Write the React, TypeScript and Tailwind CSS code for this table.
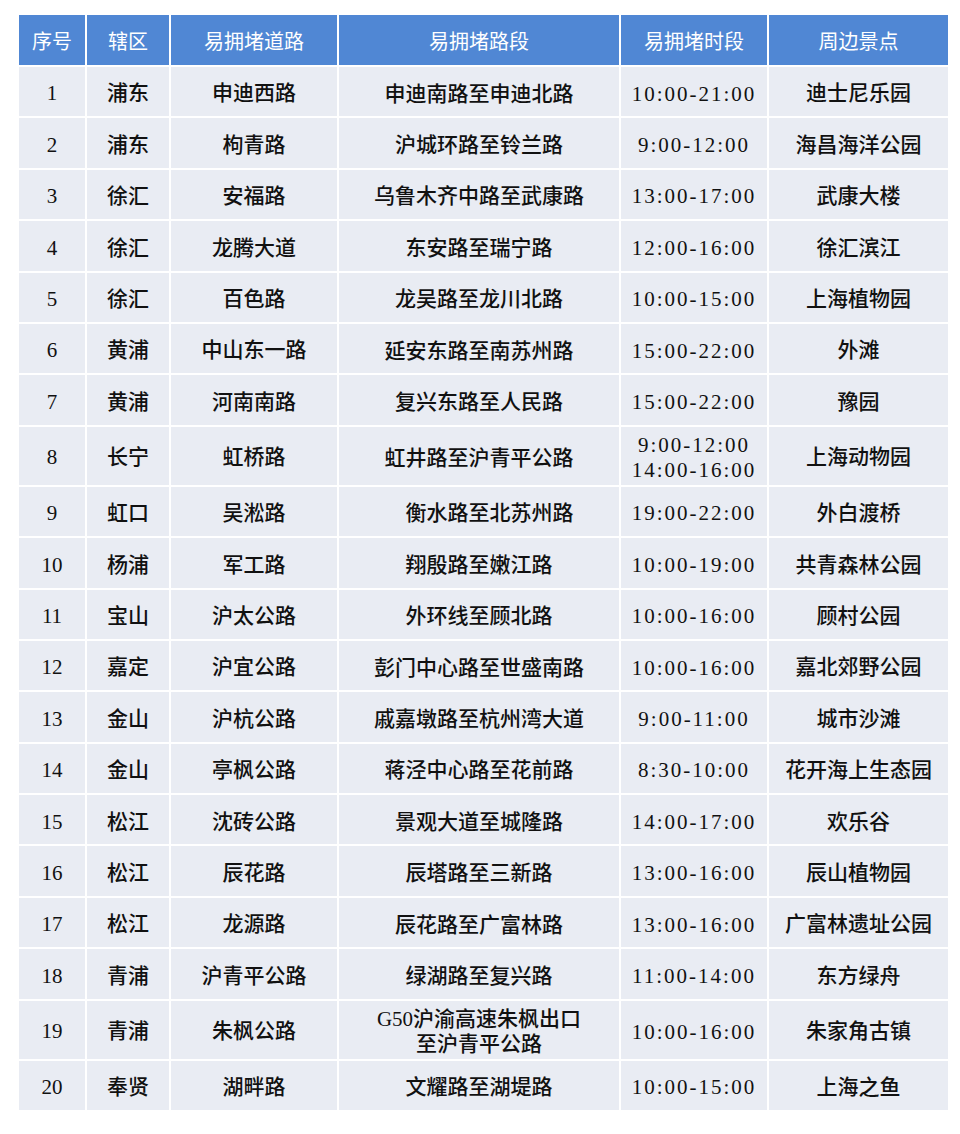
const rows: [string, string, string, string[], string[], string][] = [
  ["1", "浦东", "申迪西路", ["申迪南路至申迪北路"], ["10:00-21:00"], "迪士尼乐园"],
  ["2", "浦东", "枸青路", ["沪城环路至铃兰路"], ["9:00-12:00"], "海昌海洋公园"],
  ["3", "徐汇", "安福路", ["乌鲁木齐中路至武康路"], ["13:00-17:00"], "武康大楼"],
  ["4", "徐汇", "龙腾大道", ["东安路至瑞宁路"], ["12:00-16:00"], "徐汇滨江"],
  ["5", "徐汇", "百色路", ["龙吴路至龙川北路"], ["10:00-15:00"], "上海植物园"],
  ["6", "黄浦", "中山东一路", ["延安东路至南苏州路"], ["15:00-22:00"], "外滩"],
  ["7", "黄浦", "河南南路", ["复兴东路至人民路"], ["15:00-22:00"], "豫园"],
  ["8", "长宁", "虹桥路", ["虹井路至沪青平公路"], ["9:00-12:00", "14:00-16:00"], "上海动物园"],
  ["9", "虹口", "吴淞路", ["\u3000衡水路至北苏州路"], ["19:00-22:00"], "外白渡桥"],
  ["10", "杨浦", "军工路", ["翔殷路至嫩江路"], ["10:00-19:00"], "共青森林公园"],
  ["11", "宝山", "沪太公路", ["外环线至顾北路"], ["10:00-16:00"], "顾村公园"],
  ["12", "嘉定", "沪宜公路", ["彭门中心路至世盛南路"], ["10:00-16:00"], "嘉北郊野公园"],
  ["13", "金山", "沪杭公路", ["戚嘉墩路至杭州湾大道"], ["9:00-11:00"], "城市沙滩"],
  ["14", "金山", "亭枫公路", ["蒋泾中心路至花前路"], ["8:30-10:00"], "花开海上生态园"],
  ["15", "松江", "沈砖公路", ["景观大道至城隆路"], ["14:00-17:00"], "欢乐谷"],
  ["16", "松江", "辰花路", ["辰塔路至三新路"], ["13:00-16:00"], "辰山植物园"],
  ["17", "松江", "龙源路", ["辰花路至广富林路"], ["13:00-16:00"], "广富林遗址公园"],
  ["18", "青浦", "沪青平公路", ["绿湖路至复兴路"], ["11:00-14:00"], "东方绿舟"],
  ["19", "青浦", "朱枫公路", ["G50沪渝高速朱枫出口", "至沪青平公路"], ["10:00-16:00"], "朱家角古镇"],
  ["20", "奉贤", "湖畔路", ["文耀路至湖堤路"], ["10:00-15:00"], "上海之鱼"],
];

const headers = ["序号", "辖区", "易拥堵道路", "易拥堵路段", "易拥堵时段", "周边景点"];

export default function App() {
  return (
    <div className="min-h-[1134px] w-[960px] bg-white pt-[15px] pl-[19px] font-['Liberation_Serif','Noto_Sans_CJK_SC',serif] text-[21px] font-medium text-[#111]">
      <div className="grid w-[929px] grid-cols-[66px_82px_166px_280px_146px_179px] gap-[2px] bg-white">
        {headers.map((h) => (
          <div
            key={h}
            className="flex h-[50px] items-center justify-center bg-[#5087d4] pt-[4px] text-[20px] font-normal text-white"
          >
            {h}
          </div>
        ))}
        {rows.map(([no, area, road, seg, time, spot]) => {
          const tall = seg.length > 1 || time.length > 1;
          const h = tall ? "h-[58px]" : "h-[49.4px]";
          return (
            <div key={no} className="contents">
              <div className={`${h} flex items-center justify-center bg-[#e9ecf3] pt-[5px]`}>{no}</div>
              <div className={`${h} flex items-center justify-center bg-[#e9ecf3] pt-[5px]`}>{area}</div>
              <div className={`${h} flex items-center justify-center bg-[#e9ecf3] pt-[5px]`}>{road}</div>
              <div className={`${h} flex flex-col items-center justify-center bg-[#e9ecf3] pt-[5px] leading-[25px] whitespace-pre`}>
                {seg.map((s) => (
                  <span key={s}>{s}</span>
                ))}
              </div>
              <div className={`${h} flex flex-col items-center justify-center bg-[#e9ecf3] pt-[5px] leading-[25px] tracking-[2px]`}>
                {time.map((t) => (
                  <span key={t}>{t}</span>
                ))}
              </div>
              <div className={`${h} flex items-center justify-center bg-[#e9ecf3] pt-[5px]`}>{spot}</div>
            </div>
          );
        })}
      </div>
    </div>
  );
}
